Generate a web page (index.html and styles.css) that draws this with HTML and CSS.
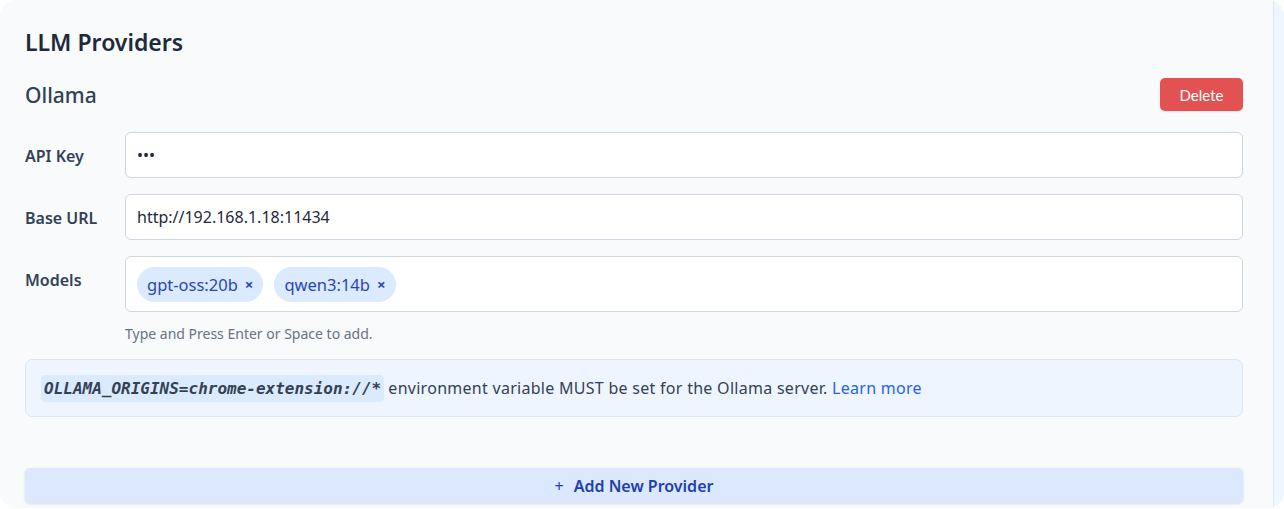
FILE: index.html
```html
<!DOCTYPE html>
<html>
<head>
<meta charset="utf-8">
<link rel="stylesheet" href="styles.css">
</head>
<body>
<div class="frame">
  <div class="panel">
    <h1 class="title">LLM Providers</h1>
    <div class="provider">
      <div class="provider-head">
        <h2 class="provider-name">Ollama</h2>
        <button class="btn-delete">Delete</button>
      </div>
      <div class="field">
        <label class="label">API Key</label>
        <div class="input">•••</div>
      </div>
      <div class="field">
        <label class="label">Base URL</label>
        <div class="input">http://192.168.1.18:11434</div>
      </div>
      <div class="field">
        <label class="label">Models</label>
        <div class="field-body">
          <div class="input tags">
            <span class="tag">gpt-oss:20b <span class="tag-x">×</span></span>
            <span class="tag">qwen3:14b <span class="tag-x">×</span></span>
          </div>
          <div class="hint">Type and Press Enter or Space to add.</div>
        </div>
      </div>
      <div class="notice">
        <p class="notice-line"><code class="code">OLLAMA_ORIGINS=chrome-extension://*</code> <span class="notice-text">environment variable MUST be set for the Ollama server. <a class="link" href="#">Learn more</a></span></p>
      </div>
    </div>
    <button class="btn-add"><span class="plus">+</span>Add New Provider</button>
  </div>
  <div class="side"></div>
</div>
</body>
</html>
```

FILE: styles.css
```css
* { box-sizing: border-box; }
html, body { margin: 0; padding: 0; background: #ffffff; }
body {
  font-family: "Noto Sans", "Open Sans", sans-serif;
  color: #334155;
}
.frame {
  display: flex;
  height: 508px;
  border-radius: 16px;
  overflow: hidden;
  background: #f8fafc;
}
.panel {
  flex: 1;
  padding: 24px 30px 0 25px;
  background: #f8fafc;
}
.side {
  width: 11px;
  background: #eef6ff;
  border-left: 1px solid #dde9f7;
}
.title {
  margin: 0;
  font-size: 23px;
  line-height: 36px;
  font-weight: 600;
  color: #1e293b;
}
.provider { margin-top: 18px; }
.provider-head {
  display: flex;
  justify-content: space-between;
  align-items: center;
  height: 33px;
  margin-bottom: 21px;
}
.provider-name {
  margin: 0;
  font-size: 21px;
  font-weight: 500;
  color: #334155;
}
.btn-delete {
  width: 83px;
  height: 33px;
  border: none;
  border-radius: 5px;
  background: #e25252;
  color: #ffffff;
  font-family: "Lato", sans-serif;
  font-size: 15px;
  box-shadow: 0 1px 2px rgba(0,0,0,0.08);
}
.field {
  display: flex;
  align-items: flex-start;
  margin-bottom: 16px;
}
.label {
  width: 100px;
  flex: none;
  padding-top: 12px;
  line-height: 24px;
  font-size: 16px;
  font-weight: 600;
  color: #334155;
}
.field-body { flex: 1; }
.input {
  flex: 1;
  height: 46px;
  display: flex;
  align-items: center;
  padding: 0 11px;
  background: #ffffff;
  border: 1px solid #cfd6df;
  border-radius: 6px;
  font-size: 16px;
  color: #1e293b;
}
.tags {
  height: 56px;
  gap: 11px;
}
.tag {
  display: inline-flex;
  align-items: center;
  height: 35px;
  padding: 0 10px;
  border-radius: 18px;
  background: #dbeafe;
  color: #2846b8;
  font-size: 16.5px;
  gap: 7px;
}
.tag-x { font-weight: 700; font-size: 15px; }
.hint {
  margin-top: 12px;
  font-size: 14px;
  color: #6b7280;
}
.notice {
  margin-top: 15px;
  height: 58px;
  display: flex;
  align-items: center;
  padding: 0 15px;
  background: #eef5ff;
  border: 1px solid #d8e6fb;
  border-radius: 7px;
  font-size: 16px;
  color: #334155;
}
.notice-line { margin: 0; white-space: nowrap; }
.notice-text { letter-spacing: 0.28px; }
.code {
  font-family: "DejaVu Sans Mono", monospace;
  font-weight: 700;
  font-style: italic;
  font-size: 16px;
  background: #dbeafe;
  padding: 4px 3px;
  border-radius: 4px;
  color: #334155;
}
.link { color: #2563eb; text-decoration: none; }
.btn-add {
  display: flex;
  justify-content: center;
  align-items: center;
  width: 100%;
  height: 35px;
  margin-top: 51px;
  border: none;
  border-radius: 5px;
  background: #dbe8fd;
  color: #1e40af;
  font-family: "Noto Sans", sans-serif;
  font-size: 16px;
  font-weight: 600;
  box-shadow: 0 1px 3px rgba(0,0,0,0.12);
}
.plus { font-weight: 400; margin-right: 10px; }
```
